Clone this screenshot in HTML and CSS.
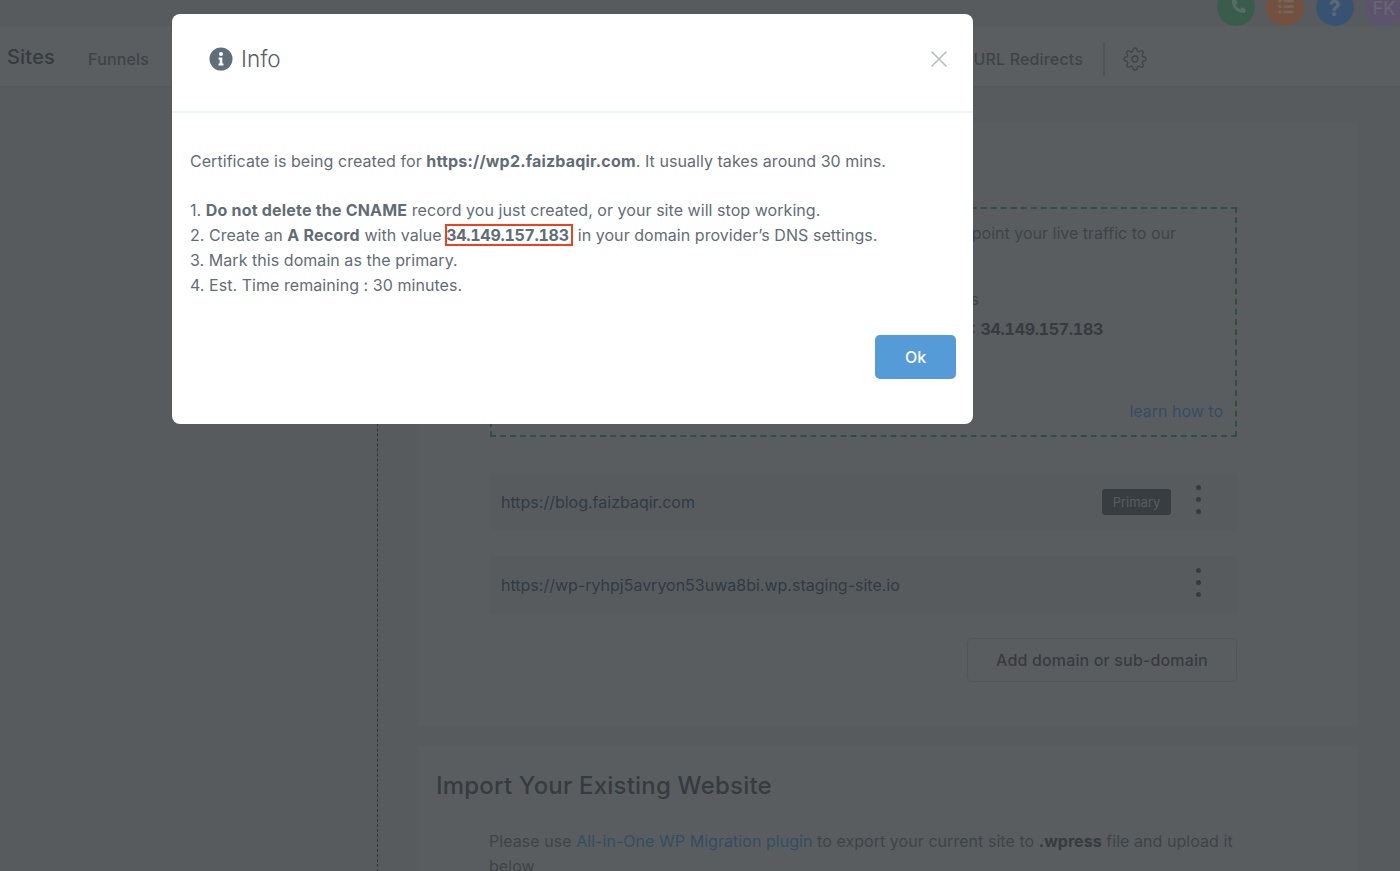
FILE: index.html
```html
<!DOCTYPE html>
<html lang="en">
<head>
<meta charset="utf-8">
<title>Sites</title>
<link rel="stylesheet" href="styles.css">
</head>
<body>
<div class="page">
  <div class="topbar">
    <span class="circle green">
      <svg viewBox="0 0 24 24" width="20" height="20"><path fill="currentColor" d="M6.6 3.2 9.7 2.4c.5-.1 1 .1 1.2.6l1.5 3.5c.2.4.1.9-.3 1.2L10.200 9.300c1.100 2.300 3 4.300 5.400 5.400l1.600-1.900c.3-.4.800-.5 1.200-.3l3.500 1.500c.5.200.7.700.6 1.200l-.8 3.300c-.1.500-.5.800-1 .8C11.900 19.300 5.600 13 5.800 4.200c0-.5.300-.9.800-1z"/></svg>
    </span>
    <span class="circle orange">
      <svg viewBox="0 0 24 24" width="19" height="19"><g fill="currentColor"><circle cx="5" cy="5" r="2.200"/><circle cx="5" cy="12" r="2.200"/><circle cx="5" cy="19" r="2.200"/><rect x="9.500" y="3.500" width="13" height="3" rx="1"/><rect x="9.500" y="10.500" width="13" height="3" rx="1"/><rect x="9.500" y="17.500" width="13" height="3" rx="1"/></g></svg>
    </span>
    <span class="circle blue"><b class="qmark">?</b></span>
    <span class="circle purple">FK</span>
  </div>

  <nav class="nav">
    <span class="nav-title">Sites</span>
    <a class="nav-link">Funnels</a>
    <a class="nav-link nav-push">URL Redirects</a>
    <span class="nav-divider"></span>
    <svg class="gear" viewBox="0 0 24 24" width="24" height="24" fill="none" stroke="currentColor" stroke-width="1.300" stroke-linecap="round" stroke-linejoin="round"><circle cx="12" cy="12" r="3"/><path d="M19.400 15a1.650 1.650 0 0 0 .33 1.820l.06.06a2 2 0 1 1-2.830 2.830l-.06-.06a1.650 1.650 0 0 0-2.800 1.170V21a2 2 0 1 1-4 0v-.09a1.650 1.650 0 0 0-2.820-1.130l-.06.06a2 2 0 1 1-2.830-2.830l.06-.06a1.650 1.650 0 0 0-1.170-2.800H3a2 2 0 1 1 0-4h.09a1.650 1.650 0 0 0 1.130-2.820l-.06-.06a2 2 0 1 1 2.830-2.830l.06.06a1.650 1.650 0 0 0 1.820.33H9a1.650 1.650 0 0 0 1-1.510V3a2 2 0 1 1 4 0v.09a1.650 1.650 0 0 0 2.800 1.170l.06-.06a2 2 0 1 1 2.830 2.830l-.06.06a1.650 1.650 0 0 0-.33 1.820V9c.26.6.85 1 1.510 1H21a2 2 0 1 1 0 4h-.09c-.66 0-1.250.4-1.510 1z"/></svg>
  </nav>

  <div class="layout">
    <aside class="sidebar"></aside>
    <main class="content">
      <section class="card card-domains">
        <div class="dashed">
          <p class="dash-line dash-first">To use this domain, point your live traffic to our</p>
          <p class="dash-line dash-second">Steps</p>
          <p class="dash-line dash-third">IP: <strong>34.149.157.183</strong></p>
          <p class="dash-line dash-link"><a class="link">learn how to</a></p>
        </div>
        <div class="domain-row">
          <span class="domain">https://blog.faizbaqir.com</span>
          <span class="badge">Primary</span>
          <span class="dots"><i></i><i></i><i></i></span>
        </div>
        <div class="domain-row">
          <span class="domain">https://wp-ryhpj5avryon53uwa8bi.wp.staging-site.io</span>
          <span class="dots"><i></i><i></i><i></i></span>
        </div>
        <div class="add-wrap"><button class="add-btn">Add domain or sub-domain</button></div>
      </section>
      <section class="card card-import">
        <h2 class="import-title">Import Your Existing Website</h2>
        <p class="import-text">Please use <a class="link">All-in-One WP Migration plugin</a> to export your current site to <strong>.wpress</strong> file and upload it below</p>
      </section>
    </main>
  </div>
</div>

<div class="overlay">
  <div class="modal">
    <header class="modal-head">
      <svg class="info-icon" viewBox="0 0 24 24" width="24" height="24"><path fill="currentColor" fill-rule="evenodd" d="M12 .5a11.500 11.500 0 1 1 0 23 11.500 11.500 0 0 1 0-23zM12 5a2 2 0 1 0 0 4 2 2 0 0 0 0-4zM9.500 10.500v2h1.200v4H9.500v2h5v-2h-1.200v-6z"/></svg>
      <h1 class="modal-title">Info</h1>
      <svg class="close" viewBox="0 0 18 18" width="18" height="18" fill="none" stroke="currentColor" stroke-width="1.500"><path d="M1.500 1.500l15 15M16.500 1.500l-15 15"/></svg>
    </header>
    <div class="modal-body">
      <p class="lead">Certificate is being created for <strong>https://wp2.faizbaqir.com</strong>. It usually takes around 30 mins.</p>
      <p class="step">1. <strong>Do not delete the CNAME</strong> record you just created, or your site will stop working.</p>
      <p class="step">2. Create an <strong>A Record</strong> with value <strong class="marked">34.149.157.183</strong> in your domain provider’s DNS settings.</p>
      <p class="step">3. Mark this domain as the primary.</p>
      <p class="step">4. Est. Time remaining : 30 minutes.</p>
      <div class="modal-foot"><button class="ok">Ok</button></div>
    </div>
  </div>
</div>
</body>
</html>
```

FILE: styles.css
```css
* { box-sizing: border-box; }
html, body { margin: 0; height: 100%; overflow: hidden; }
body { font-family: Inter, "Liberation Sans", sans-serif; font-size: 16px; color: #5e6266; background: #a3a7a9; }
p, h1, h2 { margin: 0; }

.page { height: 871px; overflow: hidden; }

.topbar { height: 26px; display: flex; justify-content: flex-end; align-items: flex-end; gap: 11.500px; margin-right: -3px; overflow: hidden; }
.circle { flex: none; width: 38px; height: 38px; border-radius: 50%; display: flex; align-items: center; justify-content: center; padding-top: 2px; color: #fff; font-size: 18px; }
.green { background: #4fa876; color: #a9d3bd; padding: 0 0 0 3px; }
.orange { background: #f08a50; color: #f6c6a8; padding: 0 0 1px; }
.blue { background: #4c90e0; color: #b5cdea; }
.purple { background: #b28fd0; color: #d8c8e4; }
.qmark { font-size: 21px; line-height: 1; font-weight: 800; }

.nav { height: 62px; display: flex; align-items: center; padding: 6px 253px 0 7px; background: #abafb1; border-bottom: 2px solid #9a9ea2; }
.nav-title { font-size: 20px; font-weight: 500; color: #484c50; margin-right: 33px; margin-top: -4px; letter-spacing: .2px; }
.nav-link { font-size: 16px; font-weight: 500; letter-spacing: .15px; color: #5e6266; }
.nav-push { margin-left: auto; }
.nav-divider { width: 2px; height: 34px; margin: 0 18px 0 20px; background: #8f9396; }
.gear { color: #5e6266; }

.layout { display: flex; height: 784px; overflow: hidden; }
.sidebar { flex: none; width: 378px; border-right: 1px dashed #3a3e42; }
.content { flex: 1; padding: 35px 43px 0 40px; display: flex; flex-direction: column; gap: 20px; }
.card { flex: none; background: #a8acaf; }
.card-domains { height: 603px; padding: 84px 120px 0 72px; }
.card-import { padding: 22px 18px 40px; }

.dashed { height: 230px; border: 2px dashed #2f8a52; padding-top: 12px; color: #5e6266; }
.dash-line { text-align: right; line-height: 25px; white-space: nowrap; overflow: hidden; }
.dash-first { padding-right: 59px; }
.dash-second { margin-top: 41px; padding-right: 256px; }
.dash-third { margin-top: 5px; padding-right: 132px; }
.dash-third strong { font-weight: 700; color: #474b50; font-variant-numeric: tabular-nums; letter-spacing: -.3px; }
.dash-link { margin-top: 57px; padding-right: 12px; }
.link { color: #3f7cb8; }

.domain-row { height: 58px; margin-top: 36px; padding: 0 35px 0 11px; background: #a3a7aa; display: flex; align-items: center; gap: 25px; color: #35485f; font-size: 16px; }
.domain-row + .domain-row { margin-top: 25px; }
.domain { flex: 1; }
.badge { width: 69px; height: 26px; border-radius: 3px; background: #4a5258; color: #a4acb2; font-size: 13px; display: flex; align-items: center; justify-content: center; }
.dots { width: 6px; margin-bottom: 6px; display: flex; flex-direction: column; gap: 7px; }
.dots i { display: block; width: 5px; height: 5px; border-radius: 50%; background: #474b50; }

.add-wrap { display: flex; justify-content: flex-end; margin-top: 24px; }
.add-btn { width: 270px; height: 44px; font: 500 16px Inter, sans-serif; letter-spacing: .15px; color: #484c50; background: #a8acaf; border: 1px solid #909498; border-radius: 5px; }

.import-title { font-size: 24px; font-weight: 500; letter-spacing: .2px; line-height: 36px; color: #474b50; }
.import-text { margin: 25px 0 0 53px; line-height: 25px; width: 750px; letter-spacing: .05px; }
.import-text strong { font-weight: 700; color: #474b50; }

.overlay { position: fixed; inset: 0; padding: 14px 0 0 172px; background: rgba(46, 50, 54, .65); }
.modal { width: 801px; height: 410px; background: #fff; border-radius: 8px; color: #5f6d77; }
.modal-head { height: 99px; padding: 0 25px 8px 37px; display: flex; align-items: center; border-bottom: 2px solid #f1f5f8; }
.info-icon { flex: none; color: #5e6f7b; }
.modal-title { flex: 1; margin-left: 8px; font-size: 22.500px; font-weight: 300; color: #556069; }
.close { color: #b4bcc1; }
.modal-body { padding: 36px 18px 0; font-size: 16px; line-height: 25px; letter-spacing: .05px; }
.lead { margin-bottom: 24px; }
.modal-body strong { font-weight: 700; letter-spacing: .2px; }
.modal-body .marked { position: relative; margin-right: 4.500px; font-variant-numeric: tabular-nums; letter-spacing: -.3px; }
.marked::after { content: ""; position: absolute; left: -1px; right: -4px; top: -1px; bottom: -1px; border: 2px solid #f0401e; }
.modal-foot { display: flex; justify-content: flex-end; margin-top: 37px; }
.ok { width: 81px; height: 44px; border: 0; border-radius: 5px; background: #559bd8; color: #fff; font: 500 16px Inter, sans-serif; margin-right: -1px; }
```
